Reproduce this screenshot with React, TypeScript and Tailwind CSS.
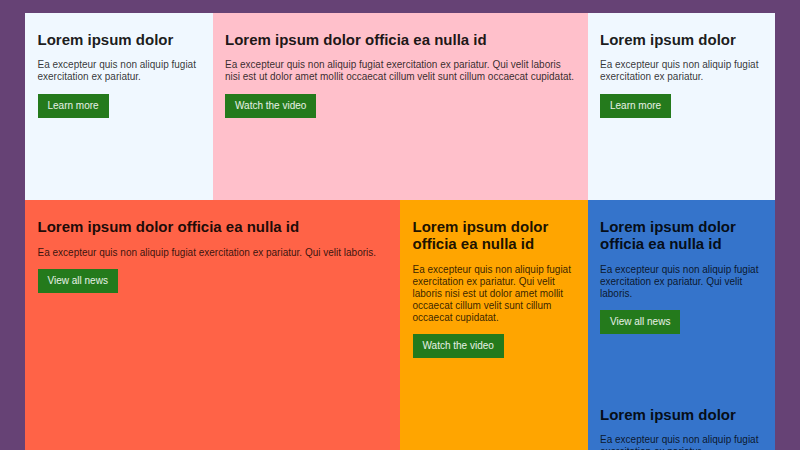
import React from "react";

type CardProps = {
  bg: string;
  span?: string;
  title: string;
  text: string;
  button?: string;
};

function Card({ bg, span = "", title, text, button }: CardProps) {
  return (
    <div className={`${bg} ${span} p-[12.5px]`}>
      <h2 className="mt-[5.5px] text-[15px] leading-[17px] font-bold text-black/90">{title}</h2>
      <p className="mt-[11.5px] text-[10px] leading-[12px] text-black/80">{text}</p>
      {button && (
        <button className="mt-[10.5px] bg-[#247a1c] px-[10px] py-[6px] text-[10px] leading-[12px] text-white/90">
          {button}
        </button>
      )}
    </div>
  );
}

export default function App() {
  return (
    <div
      className="min-h-screen bg-[#664275] pt-[12.5px] px-[25px]"
      style={{ fontFamily: '"Liberation Sans", Arial, sans-serif' }}
    >
      <div className="grid w-[750px] grid-cols-4 auto-rows-[187.5px]">
        <Card
          bg="bg-[#f0f8ff]"
          title="Lorem ipsum dolor"
          text="Ea excepteur quis non aliquip fugiat exercitation ex pariatur."
          button="Learn more"
        />
        <Card
          bg="bg-[#ffc0cb]"
          span="col-span-2"
          title="Lorem ipsum dolor officia ea nulla id"
          text="Ea excepteur quis non aliquip fugiat exercitation ex pariatur. Qui velit laboris nisi est ut dolor amet mollit occaecat cillum velit sunt cillum occaecat cupidatat."
          button="Watch the video"
        />
        <Card
          bg="bg-[#f0f8ff]"
          title="Lorem ipsum dolor"
          text="Ea excepteur quis non aliquip fugiat exercitation ex pariatur."
          button="Learn more"
        />
        <Card
          bg="bg-[#ff6347]"
          span="col-span-2 row-span-2"
          title="Lorem ipsum dolor officia ea nulla id"
          text="Ea excepteur quis non aliquip fugiat exercitation ex pariatur. Qui velit laboris."
          button="View all news"
        />
        <Card
          bg="bg-[#ffa500]"
          span="row-span-2"
          title="Lorem ipsum dolor officia ea nulla id"
          text="Ea excepteur quis non aliquip fugiat exercitation ex pariatur. Qui velit laboris nisi est ut dolor amet mollit occaecat cillum velit sunt cillum occaecat cupidatat."
          button="Watch the video"
        />
        <Card
          bg="bg-[#3574cb]"
          title="Lorem ipsum dolor officia ea nulla id"
          text="Ea excepteur quis non aliquip fugiat exercitation ex pariatur. Qui velit laboris."
          button="View all news"
        />
        <Card
          bg="bg-[#3574cb]"
          title="Lorem ipsum dolor"
          text="Ea excepteur quis non aliquip fugiat exercitation ex pariatur."
          button="Learn more"
        />
      </div>
    </div>
  );
}
